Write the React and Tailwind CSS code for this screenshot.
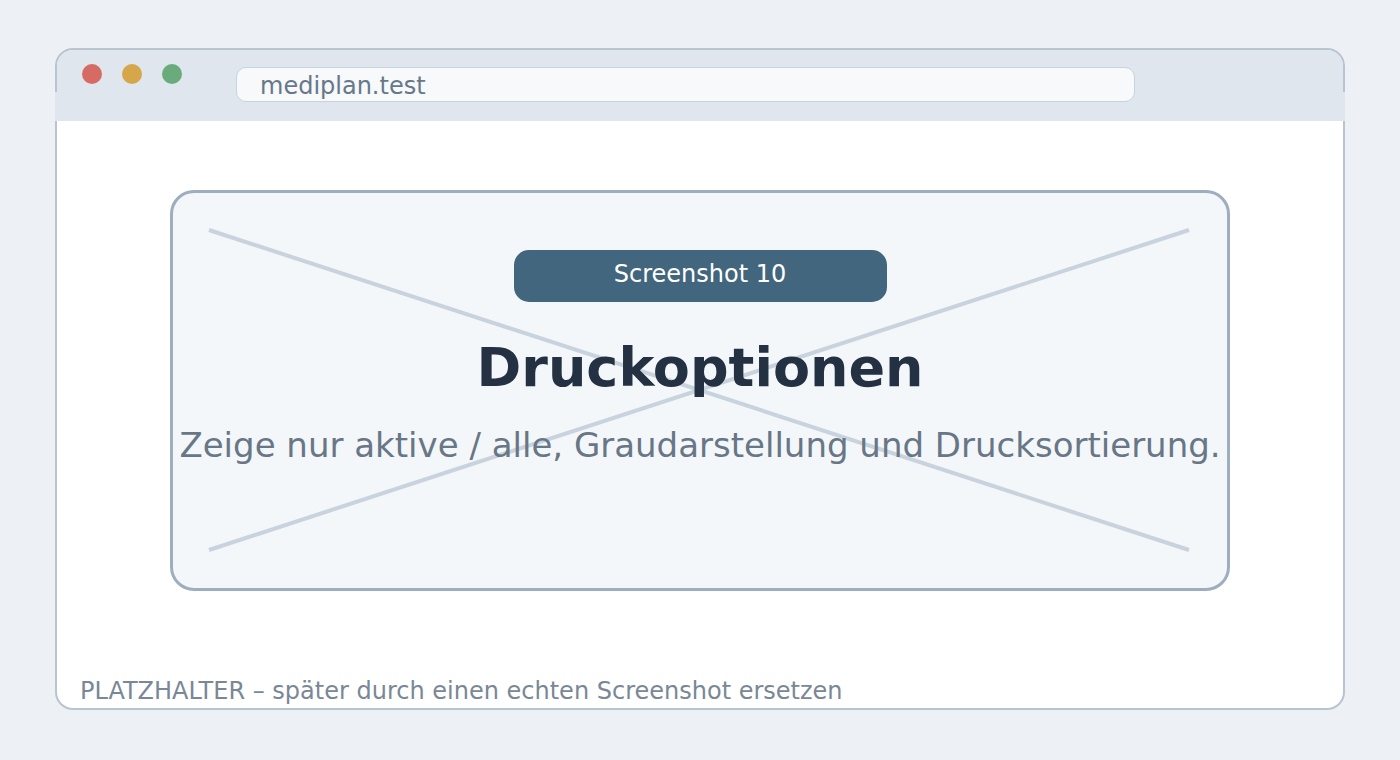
import React from 'react';

const font = { fontFamily: '"DejaVu Sans", "Noto Sans", sans-serif' };

const TrafficLights = () => (
  <div className="flex gap-[20px]">
    <span className="h-[20px] w-[20px] rounded-full bg-[#d66b64]" />
    <span className="h-[20px] w-[20px] rounded-full bg-[#d6a64b]" />
    <span className="h-[20px] w-[20px] rounded-full bg-[#69ab7a]" />
  </div>
);

const Placeholder = () => (
  <div className="relative mx-auto flex h-[401px] w-[1060px] flex-col items-center rounded-[24px] border-[3px] border-[#9eaebe] bg-[#f3f7fa]">
    {/* crossed-out frame */}
    <svg
      className="absolute inset-0 h-full w-full"
      viewBox="0 0 1054 395"
      preserveAspectRatio="none"
    >
      <line x1="36" y1="37" x2="1016" y2="357" stroke="#c8d3dd" strokeWidth="4" />
      <line x1="36" y1="357" x2="1016" y2="37" stroke="#c8d3dd" strokeWidth="4" />
    </svg>

    <div className="relative mt-[57px] flex h-[52px] w-[373px] items-center justify-center rounded-[15px] bg-[#42667e] pb-[5px]">
      <span className="text-[24px] leading-[24px] text-white">Screenshot 10</span>
    </div>
    <h1 className="relative mt-[39px] text-[54px] font-bold leading-[54px] text-[#233142]">
      Druckoptionen
    </h1>
    <p className="relative mt-[33px] text-[34px] leading-[34px] text-[#687686]">
      Zeige nur aktive / alle, Graudarstellung und Drucksortierung.
    </p>
  </div>
);

export default function App() {
  return (
    <div className="min-h-[760px] bg-[#edf1f5] px-[55px] pt-[48px]" style={font}>
      <div className="flex h-[662px] flex-col rounded-[18px] border-2 border-[#b8c4d0] bg-white">
        <header className="relative flex h-[71px] items-start rounded-t-[16px] bg-[#dfe6ed]">
          {/* lower band runs over the side borders */}
          <div className="absolute -left-[2px] -right-[2px] bottom-0 h-[29px] bg-[#dfe6ed]" />
          <div className="relative ml-[25px] mt-[14px]">
            <TrafficLights />
          </div>
          <div className="relative ml-[54px] mt-[17px] flex h-[35px] w-[899px] items-center rounded-[10px] border-[1.5px] border-[#c9d3dd] bg-[#f7f9fb] pl-[23px] pt-[3px]">
            <span className="text-[24px] leading-[24px] text-[#66788a]">mediplan.test</span>
          </div>
        </header>

        <main className="flex flex-1 flex-col pt-[69px]">
          <Placeholder />
          <p className="mt-auto pb-[5px] pl-[23px] text-[24px] leading-[24px] text-[#7a8796]">
            PLATZHALTER – später durch einen echten Screenshot ersetzen
          </p>
        </main>
      </div>
    </div>
  );
}
